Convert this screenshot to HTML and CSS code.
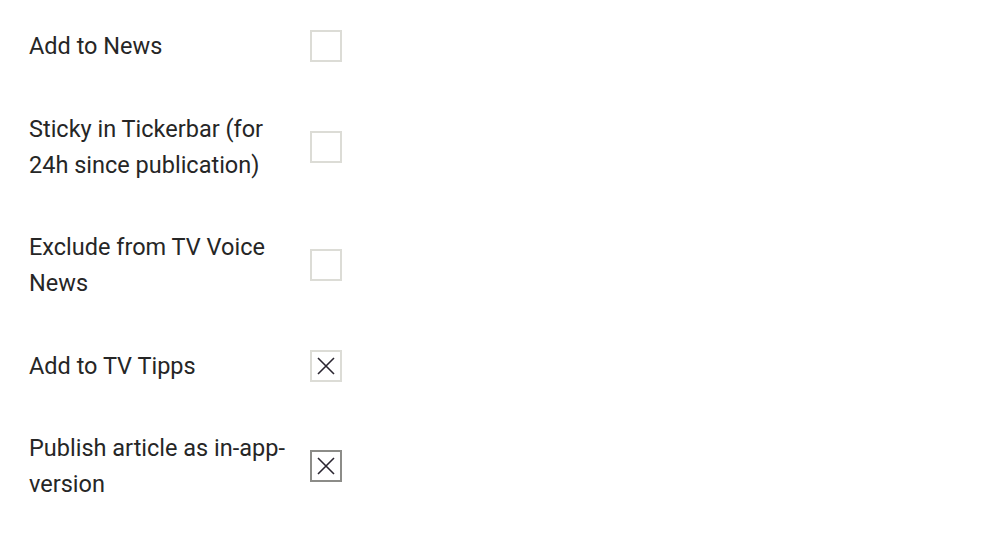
FILE: index.html
```html
<!DOCTYPE html>
<html>
<head>
<meta charset="utf-8">
<link rel="stylesheet" href="styles.css">
</head>
<body>
<div class="options">
  <div class="row">
    <span class="label">Add to News</span>
    <span class="box"></span>
  </div>
  <div class="row">
    <span class="label">Sticky in Tickerbar (for 24h since publication)</span>
    <span class="box"></span>
  </div>
  <div class="row">
    <span class="label">Exclude from TV Voice News</span>
    <span class="box"></span>
  </div>
  <div class="row">
    <span class="label">Add to TV Tipps</span>
    <span class="box checked"><svg viewBox="0 0 28 28" width="28" height="28"><path d="M6 6 L22 22 M22 6 L6 22" stroke="#2a2530" stroke-width="1.6" fill="none"/></svg></span>
  </div>
  <div class="row">
    <span class="label">Publish article as in-app-version</span>
    <span class="box checked focus"><svg viewBox="0 0 28 28" width="28" height="28"><path d="M6 6 L22 22 M22 6 L6 22" stroke="#2a2530" stroke-width="1.6" fill="none"/></svg></span>
  </div>
</div>
</body>
</html>
```
FILE: styles.css
```css
html, body {
  margin: 0;
  background: #ffffff;
}
body {
  font-family: Roboto, "Liberation Sans", sans-serif;
  color: #262626;
}
.options {
  display: flex;
  flex-direction: column;
  gap: 46.5px;
  padding: 28px 29px;
}
.row {
  display: flex;
  align-items: center;
  gap: 20px;
}
.label {
  width: 261px;
  font-size: 23.5px;
  line-height: 36px;
}
.box {
  width: 28px;
  height: 28px;
  border: 2px solid #dcdcd6;
  display: flex;
  align-items: center;
  justify-content: center;
  flex: none;
}
.box svg {
  display: block;
}
.box.focus {
  border-color: #8c8c88;
}
```
